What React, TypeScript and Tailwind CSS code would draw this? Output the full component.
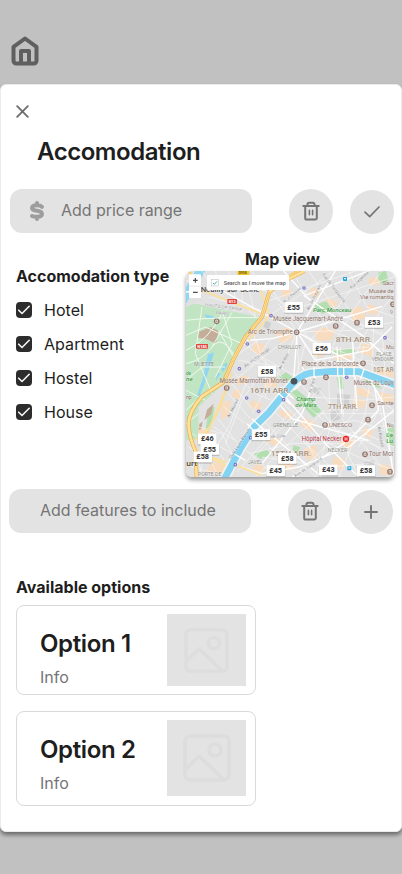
import React from "react";

type Label = { t: string; x: number; y: number; w: number; s: number; c?: string; r?: number; b?: boolean; i?: boolean };

const brown = "#8d6e63";
const grey = "#8a8a8a";
const green = "#3d9a45";
const area = "#a58f78";

const labels: Label[] = [
  { t: "Neuilly-sur-Seine", x: 56, y: 76, w: 176, s: 21, c: "#4a4a4a", b: true },
  { t: "HAUTS-DE-SEINE", x: 68, y: 117, w: 112, s: 13, c: "#a3a3a3", r: 8 },
  { t: "PARIS", x: 101, y: 142, w: 40, s: 13, c: "#a3a3a3", r: 5 },
  { t: "Musée Jacquemart-André", x: 273, y: 162, w: 210, s: 19, c: brown },
  { t: "Arc de Triomphe", x: 197, y: 202, w: 135, s: 19, c: brown },
  { t: "Parc Monceau", x: 393, y: 135, w: 115, s: 17, c: green, i: true, b: true },
  { t: "Sacr", x: 602, y: 53, w: 34, s: 17, c: brown },
  { t: "Musée de", x: 560, y: 77, w: 75, s: 18, c: brown },
  { t: "Vie romantiq", x: 534, y: 95, w: 101, s: 18, c: brown },
  { t: "9", x: 623, y: 140, w: 10, s: 17, c: area },
  { t: "CHAILLOT", x: 287, y: 247, w: 71, s: 15, c: "#8d8d82" },
  { t: "8TH ARR.", x: 461, y: 225, w: 110, s: 20, c: area, b: true },
  { t: "Mu", x: 612, y: 246, w: 23, s: 17, c: brown },
  { t: "PLACE", x: 583, y: 266, w: 46, s: 15, c: "#8d8d82" },
  { t: "VENDÔME", x: 569, y: 281, w: 66, s: 15, c: "#8d8d82" },
  { t: "Place de la Concorde", x: 359, y: 296, w: 171, s: 19, c: brown },
  { t: "1ST AR", x: 573, y: 315, w: 62, s: 19, c: area, b: true },
  { t: "MUETTE", x: 36, y: 297, w: 60, s: 15, c: "#8d8d82" },
  { t: "Musée Marmottan Monet", x: 113, y: 349, w: 204, s: 19, c: brown },
  { t: "Musée du Louv", x: 515, y: 354, w: 120, s: 19, c: brown },
  { t: "16TH ARR.", x: 203, y: 378, w: 124, s: 20, c: area, b: true },
  { t: "Champ", x: 343, y: 402, w: 57, s: 17, c: green, i: true, b: true },
  { t: "de Mars", x: 340, y: 419, w: 64, s: 17, c: green, i: true, b: true },
  { t: "7TH ARR.", x: 438, y: 426, w: 90, s: 19, c: area, b: true },
  { t: "Sainte", x: 586, y: 413, w: 49, s: 18, c: brown },
  { t: "GRENELLE", x: 273, y: 479, w: 75, s: 15, c: "#8d8d82" },
  { t: "UNESCO", x: 441, y: 481, w: 69, s: 18, c: brown },
  { t: "Hôpital Necker", x: 359, y: 522, w: 120, s: 19, c: "#b3363f" },
  { t: "NECKER", x: 437, y: 556, w: 59, s: 15, c: "#8d8d82" },
  { t: "Tour Mor", x: 560, y: 568, w: 75, s: 19, c: brown },
  { t: "15TH ARR.", x: 266, y: 567, w: 122, s: 20, c: area, b: true },
  { t: "JAVEL", x: 198, y: 591, w: 42, s: 14, c: "#8d8d82" },
  { t: "PORTE DE", x: 48, y: 628, w: 70, s: 15, c: "#8d8d82" },
  { t: "No", x: 614, y: 481, w: 21, s: 17, c: brown },
  { t: "Le", x: 613, y: 511, w: 20, s: 17, c: green, b: true },
  { t: "Lu", x: 613, y: 529, w: 20, s: 17, c: green, b: true },
  { t: "urt", x: 13, y: 596, w: 32, s: 21, c: "#4a4a4a", b: true },
  { t: "de", x: 12, y: 323, w: 15, s: 17, c: green, i: true, b: true },
  { t: "ne", x: 12, y: 341, w: 20, s: 17, c: green, i: true, b: true },
  { t: "np", x: 12, y: 396, w: 17, s: 16, c: brown },
  { t: "Av. Victor Hugo", x: 190, y: 302, w: 92, s: 13, c: grey, r: -36 },
  { t: "Av. Kléber", x: 296, y: 308, w: 54, s: 12, c: grey, r: -62 },
  { t: "Av. Mozart", x: 142, y: 452, w: 60, s: 12, c: grey, r: -62 },
  { t: "R. J. Pereire", x: 308, y: 108, w: 66, s: 12, c: grey, r: -40 },
  { t: "Av. de Wagram", x: 381, y: 130, w: 84, s: 12, c: grey, r: -64 },
  { t: "Rue de Tocqueville", x: 420, y: 22, w: 108, s: 12, c: grey, r: 53 },
  { t: "Rue Legendre", x: 508, y: 66, w: 72, s: 12, c: grey, r: -42 },
  { t: "Quai Louis Blériot", x: 147, y: 576, w: 105, s: 12, c: "#608090", r: -57 },
  { t: "Av. Rapp", x: 388, y: 378, w: 46, s: 12, c: grey, r: -75 },
  { t: "Bd Raspail", x: 587, y: 480, w: 60, s: 12, c: grey, r: 80 },
  { t: "Rue de Vaugirard", x: 340, y: 630, w: 96, s: 12, c: grey, r: -33 },
  { t: "ile Zola", x: 266, y: 513, w: 44, s: 12, c: grey, r: -4 },
];

const prices: [string, number, number][] = [
  ["£55", 307, 105], ["£53", 548, 150], ["£56", 391, 228], ["£58", 227, 297], ["£46", 48, 500],
  ["£55", 55, 531], ["£58", 34, 554], ["£55", 209, 487], ["£58", 288, 558], ["£45", 253, 595],
  ["£43", 411, 593], ["£58", 524, 595],
];

const pois = [
  [104, 163], [344, 196], [461, 177], [525, 167], [543, 289], [366, 345], [432, 331], [134, 363], [570, 415],
  [429, 474], [558, 458], [549, 562], [624, 614], [633, 112],
];
const metros = [
  [366, 63], [267, 146], [196, 231], [172, 305], [194, 393], [230, 433], [305, 398], [494, 331], [609, 212],
  [160, 593], [206, 512],
];

const blocks: [number, number, string][] = [
  [290, 190, "32,-10 44,24 8,40 -8,14"], [395, 190, "40,-8 48,28 12,34"], [500, 130, "38,-14 54,20 16,38"],
  [455, 245, "50,0 56,30 4,34"], [540, 228, "36,8 28,42 -8,28"], [400, 240, "34,8 20,30 -10,26"],
  [390, 60, "28,10 16,34 -10,20"], [440, 90, "30,20 10,34 -8,12"], [215, 225, "34,8 28,42 -6,28"],
  [115, 410, "30,-12 28,34 4,50"], [170, 330, "26,-6 30,18 -8,26"], [240, 340, "40,-10 46,18 10,24"],
  [160, 365, "20,8 10,34 -14,22"], [525, 360, "44,12 34,34 -6,22"], [590, 375, "44,8 44,36 8,28"],
  [365, 450, "34,18 22,44 -12,24"], [480, 505, "38,14 28,42 -10,26"], [520, 390, "34,14 22,36 -8,24"],
  [290, 580, "40,-6 48,26 10,34"], [365, 545, "38,-10 42,26 8,34"], [455, 570, "34,4 30,40 -6,28"],
  [90, 585, "60,14 44,40 -20,30"], [50, 480, "38,8 36,40 -8,28"], [265, 505, "32,14 18,34 -12,18"],
  [545, 480, "30,10 20,36 -8,22"], [590, 590, "44,8 44,34 8,34"], [295, 65, "26,-12 34,14 8,28"],
  [155, 30, "60,10 44,28 -10,16"], [470, 300, "60,-6 64,8 2,10"], [565, 30, "30,6 22,28 -8,18"],
  [210, 400, "32,10 20,32 -10,18"], [300, 425, "34,16 20,34 -10,16"], [585, 300, "50,14 50,30 0,20"],
  [420, 180, "40,10 30,40 -14,30"], [560, 110, "30,12 24,36 -10,26"], [220, 590, "30,8 20,34 -10,22"],
];

const minor = [
  "M205 12L262 60L345 12M232 60L330 128L636 30M270 70L400 240M250 105L520 12M262 146L390 60L452 12",
  "M340 30L440 190L636 260M380 12L470 140L600 200M420 12L530 170L636 225M500 12L555 120L636 150M545 12L440 160L380 225",
  "M600 12L520 120L420 290M636 80L560 180L500 305M636 165L510 190L345 195M345 195L400 105M345 195L290 110M345 195L262 200",
  "M345 195L270 250L170 330M345 195L300 300L250 380M345 195L350 310M345 195L430 310M345 195L560 290L636 315",
  "M210 190L240 270L345 330M190 230L300 330M170 280L300 300M158 320L220 380L270 400M150 350L210 425M140 380L205 455M125 420L190 470M108 455L160 520",
  "M200 330L140 480L90 560M230 330L180 400L130 530M270 330L210 440M270 210L205 300M230 220L170 260M250 280L250 395M95 480L175 530M80 520L150 560",
  "M370 230L345 320M400 225L405 315M440 235L445 305M475 240L480 300M510 225L515 300M545 235L535 305M385 255L560 240M380 285L636 280M575 180L570 310M600 190L610 330",
  "M350 340L470 500L530 630M380 330L500 480L600 600M440 325L445 480L400 630M480 325L485 450M520 330L515 440L410 560L330 630M565 335L550 440L500 560L470 630M610 350L580 450L530 540",
  "M330 380L450 480L636 560M300 405L400 510L530 570L636 610M275 430L380 540L480 630M240 455L340 560L400 630M215 490L300 580L350 630M180 540L250 600L280 630",
  "M410 370L300 480L200 590M430 430L340 510L220 630M470 440L380 540L290 630M390 390L540 400L636 390M400 440L636 440M410 480L520 460L636 500M320 440L250 520L165 615",
  "M360 500L430 630M500 500L636 470M550 500L636 540M585 370L600 450L636 630M540 360L636 430M440 520L560 520L636 580M200 560L330 530L480 530M240 570L440 600L560 590",
  "M50 480L120 500L150 560M30 500L100 540L140 600M20 540L80 570L110 630M50 580L60 630M70 550L50 630M28 600L130 625",
  "M12 40L60 70M60 12L90 60L250 70M100 12L120 90M140 12L160 90M180 12L180 110L220 150M80 90L240 130M200 60L220 150",
];

const major =
  "M12 75L110 65L345 195M345 195L460 12M345 195L600 118M305 12L370 85L560 12M365 85L540 205L636 290M195 220L270 215L345 195L335 340M345 195L460 260L540 300L600 400L636 630M335 370L380 330L360 300M310 390L430 530L530 630M290 410L330 455L560 520M225 470L420 630M570 320L590 430L500 520L330 630M405 320L360 440L240 590M465 240L470 320L480 440M512 225L518 320L525 430M630 180L560 250L400 280L345 195M150 590L240 620L350 600L500 540L636 430";

function MapArt() {
  return (
    <svg viewBox="12 12 624 618" className="block h-[206px] w-[208px]" fontFamily="Roboto, 'Noto Sans', sans-serif">
      <rect x="12" y="12" width="624" height="618" fill="#e2e2e3" />
      {blocks.map(([x, y, p], k) => (
        <polygon key={k} points={"0,0 " + p} transform={`translate(${x} ${y})`} fill="#f7dcc0" />
      ))}
      <path d="M12 108L50 112L130 130L232 150L190 215L160 280L130 345L88 385L50 420L48 520L12 520Z" fill="#c1e4c3" />
      <path d="M12 70L62 100L12 120Z" fill="#dfe0e0" />
      <g fill="#b3deb0">
        <path d="M590 15l22-3 8 30-20 12-12-20zM395 115l38-12 18 26-30 12zM325 378l14-14 82 66-26 22zM290 330l22-14 20 14-12 16zM455 250l60-6 6 14-64 6zM470 306h50v8h-50zM462 320l18-2 5 48h-14zM636 480l-28 8 6 44 22 6zM198 500l34-8 8 14-28 14zM215 560l40-12 12 16-32 12zM540 330l40 14 20 22-40-12zM335 535l20 6-8 16-16-8zM80 425l18-6-12 66-18 20z" />
      </g>
      <g fill="#c5ae99">
        <path d="M48 196l38-16 24 12-8 38-30-14-24-4zM75 428l20-18-8 32-20 18zM52 470l10-6-4 22-8 4z" />
      </g>
      <path d="M440 436l28-6 12 24-30 10zM395 360l22 4-8 20-18-10zM250 160l18 8-8 20-16-8zM545 585l30-4 4 22-28 4zM465 380l40 4-6 34-34-8z" fill="#cfcfcf" />
      <path d="M78 262l18-6-10 36-20 62-16 40-6-6 18-52zM66 142l22 4 16 8-30-2zM118 300l16-14 2 10-14 20zM104 318l12 0-14 24z" fill="#8fd6f0" />
      <g fill="none" stroke="#eff8ee" strokeWidth="3">
        <path d="M12 160Q90 150 232 152M12 250Q80 220 120 140M12 205L70 180L190 235M60 120L40 260L90 380M12 290Q60 280 90 240T160 270M12 430Q60 380 130 345M110 190L160 280M12 340L60 300L130 300M12 370L70 400M120 130L150 230L100 330M12 470L50 440M150 136L90 240" />
      </g>
      <path d="M12 110L70 12L40 12L12 60Z" fill="#8fd6f0" />
      <g fill="none" stroke="#fafafa" strokeWidth="1.8">
        {minor.map((d) => <path key={d} d={d} />)}
      </g>
      <path d={major} fill="none" stroke="#fff" strokeWidth="4" />
      <path d="M60 70L232 138M232 60L262 146L200 220M140 345L85 480L40 520M50 560L150 590L240 625M12 600L60 560L140 600" fill="none" stroke="#fbe0a0" strokeWidth="6" />
      <path d="M150 318L110 430L60 520" fill="none" stroke="#f9dd9a" strokeWidth="5" />
      <path d="M125 640L175 545L216 480L260 437L300 388L330 352Q352 326 385 318L450 313L530 314L575 330L640 354" fill="none" stroke="#f2f2f0" strokeWidth="30" />
      <path d="M125 640L175 545L216 480L260 437L300 388L330 352Q352 326 385 318L450 313L530 314L575 330L640 354" fill="none" stroke="#83d3f2" strokeWidth="20" />
      <path d="M280 370L325 412M210 455L245 488M195 470L228 505M295 360L335 395M396 300V334M467 300V330M485 300V330M516 298V330M546 306L536 336M155 560L190 580" stroke="#fff" strokeWidth="4" />
      <g fill="none" strokeLinejoin="round">
        <path d="M368 12L300 45L262 75L240 150L190 210L155 275L125 345L60 388Q15 440 20 480T40 550L44 630" stroke="#e9ad49" strokeWidth="12" />
        <path d="M368 12L300 45L262 75L240 150L190 210L155 275L125 345L60 388Q15 440 20 480T40 550L44 630" stroke="#ffe09a" strokeWidth="8" />
        <path d="M262 75L240 150L190 210L155 275L125 345" stroke="#efb955" strokeWidth="2" />
        <path d="M345 12L270 62M20 12L50 58" stroke="#f7cf7a" strokeWidth="8" />
      </g>
      {metros.map(([x, y]) => (
        <g key={`${x}-${y}`}>
          <circle cx={x} cy={y} r="5.5" fill="#7a72c4" />
          <circle cx={x} cy={y} r="2.4" fill="#d5d2f0" />
        </g>
      ))}
      {pois.map(([x, y]) => (
        <g key={`${x}-${y}`}>
          <circle cx={x} cy={y} r="8.5" fill="#94756a" />
          <path d={`M${x - 4} ${y + 3.5}h8M${x - 4} ${y - 2}l4-3 4 3zM${x - 2.5} ${y - 1}v4M${x + 2.5} ${y - 1}v4`} stroke="#fff" strokeWidth="1.6" fill="none" />
        </g>
      ))}
      <circle cx="492" cy="516" r="9.5" fill="#e8232c" />
      <path d="M489 511v10M495 511v10M489 516h6" stroke="#fff" strokeWidth="2" />
      {[[489, 36], [502, 604]].map(([x, y]) => (
        <g key={x}>
          <rect x={x - 6} y={y - 6} width="12" height="12" rx="2" fill="#1ea5dc" />
          <rect x={x - 3} y={y - 3} width="6" height="4" fill="#d6f1fb" />
        </g>
      ))}
      <rect x="166" y="8" width="36" height="17" rx="2" fill="#f3c92e" />
      <text x="170" y="22" fontSize="10" fontWeight="700" fill="#6b5a14">D908</text>
      <rect x="136" y="96" width="29" height="15" rx="2" fill="#e0443f" />
      <text x="140" y="108" fontSize="12" fontWeight="700" fill="#fff" textLength="21" lengthAdjust="spacingAndGlyphs">N13</text>
      <rect x="42" y="231" width="36" height="14" rx="2" fill="#e0443f" />
      <text x="46" y="243" fontSize="12" fontWeight="700" fill="#fff" textLength="29" lengthAdjust="spacingAndGlyphs">N185</text>
      {labels.map((l, k) => (
        <text key={k} x={l.x} y={l.y} fontSize={l.s} fill={l.c} fontWeight={l.b ? 500 : 400} fontStyle={l.i ? "italic" : undefined}
          textLength={l.w} lengthAdjust="spacingAndGlyphs" stroke="#fff" strokeOpacity="0.5" strokeWidth="2" paintOrder="stroke"
          transform={l.r ? `rotate(${l.r} ${l.x} ${l.y})` : undefined}>{l.t}</text>
      ))}
      <circle cx="336" cy="343" r="10" fill="#4e5358" />
      {prices.map(([t, x, y], k) => (
        <g key={k}>
          <rect x={x - 1} y={y + 1} width="58" height="35" rx="2" fill="#000" opacity="0.16" />
          <rect x={x} y={y} width="56" height="32" rx="2" fill="#fff" />
          <text x={x + 9} y={y + 23} fontSize="19" fontWeight="800" fill="#3c3c3c" textLength="38" lengthAdjust="spacingAndGlyphs">{t}</text>
        </g>
      ))}
      <rect x="21" y="22" width="36" height="71" rx="3" fill="#fff" />
      <path d="M21 57.500H57" stroke="#ddd" strokeWidth="2" />
      <path d="M33 40h14M40 33v14M33 76h14" stroke="#4b4b4b" strokeWidth="3.500" />
      <rect x="75" y="24" width="246" height="45" rx="3" fill="#fff" />
      <rect x="89" y="37" width="20" height="20" fill="#fff" stroke="#b5b5b5" strokeWidth="1.500" />
      <path d="M93 48l4 4 8-9" fill="none" stroke="#23a2a6" strokeWidth="2.500" />
      <text x="125" y="53" fontSize="17" fontWeight="500" fill="#5b5b5b" textLength="186" lengthAdjust="spacingAndGlyphs">Search as I move the map</text>
    </svg>
  );
}

function Trash() {
  return (
    <svg viewBox="0 0 20 20" className="size-5" fill="none" stroke="#757575" strokeWidth="2" strokeLinecap="round" strokeLinejoin="round">
      <path d="M2.300 5H17.700M4.200 5v11.900a1.600 1.600 0 0 0 1.600 1.600h8.400a1.600 1.600 0 0 0 1.600-1.600V5M6.500 5V3.300a1.600 1.600 0 0 1 1.600-1.600h3.800a1.600 1.600 0 0 1 1.600 1.600V5" />
      <path d="M8.400 9.400v4.400M11.600 9.400v4.400" strokeWidth="1.600" />
    </svg>
  );
}

function Round({ children, className = "" }: { children: React.ReactNode; className?: string }) {
  return <button className={`flex size-11 shrink-0 items-center justify-center rounded-full bg-[#e3e3e3] ${className}`}>{children}</button>;
}

function Check({ label }: { label: string }) {
  return (
    <label className="flex h-[34px] items-center gap-3">
      <span className="flex size-4 items-center justify-center rounded-[4px] bg-[#2c2c2c]">
        <svg viewBox="0 0 16 16" className="size-4" fill="none" stroke="#f5f5f5" strokeWidth="1.600" strokeLinecap="round" strokeLinejoin="round">
          <path d="M13.200 4.300L6 11.500L2.700 8.200" />
        </svg>
      </span>
      <span className="tracking-[0.05px]">{label}</span>
    </label>
  );
}

function Option({ n, card, img, icon }: { n: number; card: string; img: string; icon: string }) {
  return (
    <div className={`flex w-60 justify-between rounded-lg border border-[#d9d9d9] pr-[9px] pl-[23px] ${card}`}>
      <div className="pt-[15px]">
        <h3 className="text-2xl leading-[29px] font-semibold tracking-[-0.35px]">Option {n}</h3>
        <p className="mt-[8px] leading-[22px] text-[#757575]">Info</p>
      </div>
      <div className={`flex w-[79px] items-center justify-center bg-[#e3e3e3] ${img}`}>
        <svg viewBox="0 0 48 48" className={icon} fill="none" stroke="#dddddd" strokeWidth="3.500" strokeLinejoin="round">
          <rect x="2" y="2" width="44" height="44" rx="5" />
          <circle cx="32" cy="16" r="6" />
          <path d="M2 36L16 22L40 45" />
        </svg>
      </div>
    </div>
  );
}

export default function App() {
  return (
    <div className="h-[874px] w-[402px] overflow-hidden bg-[#c1c1c1] pt-9 text-[16px] text-[#1e1e1e] [font-family:Inter,'Liberation_Sans',sans-serif]">
      <header className="h-12 pl-[11px]">
        <svg viewBox="0 0 28 30" className="h-[30px] w-7" fill="none" stroke="#5f5f5f" strokeWidth="4" strokeLinejoin="round" strokeLinecap="round">
          <path d="M2.500 10.800L14 2.500L25.500 10.800V24.800a2.800 2.800 0 0 1-2.800 2.800H5.300A2.800 2.800 0 0 1 2.500 24.800ZM10 26.500V15H18V26.500" />
        </svg>
      </header>
      <main className="flex h-[748px] w-[402px] flex-col rounded-md border border-[#ececec] bg-white shadow-[0_3px_4px_rgba(0,0,0,0.45)]">
        <button className="mt-[20px] ml-[15px] size-[13px]">
          <svg viewBox="0 0 13 13" className="size-[13px]" fill="none" stroke="#6f6f6f" strokeWidth="1.900" strokeLinecap="round">
            <path d="M1.200 1.200L11.800 11.800M11.800 1.200L1.200 11.800" />
          </svg>
        </button>
        <h1 className="mt-[19px] ml-9 text-2xl leading-[29px] font-semibold tracking-[-0.45px]">Accomodation</h1>
        <div className="mt-[23px] ml-[9px] flex">
          <div className="flex h-11 w-[242px] items-center rounded-xl bg-[#e3e3e3] pl-[19px] text-[#757575]">
            <svg viewBox="0 0 16 20" className="mr-[16px] h-5 w-4" fill="none" stroke="#9d9d9d" strokeWidth="4" strokeLinecap="round" strokeLinejoin="round">
              <path d="M13 5.800Q11.500 4.300 8 4.300Q3 4.300 3 7Q3 9.300 8 9.800Q13 10.500 13 13Q13 15.800 8 15.800Q4.500 15.800 3 15M8 2V4M8 16V18" />
            </svg>
            <span className="pb-[2px] tracking-[-0.04px]">Add price range</span>
          </div>
          <Round className="ml-[37px]"><Trash /></Round>
          <Round className="mt-px ml-[17px]">
            <svg viewBox="0 0 16 12" className="h-3 w-4" fill="none" stroke="#757575" strokeWidth="1.700" strokeLinecap="round" strokeLinejoin="round"><path d="M15 1L5.700 10.700L1 6.200" /></svg>
          </Round>
        </div>
        <div className="mt-[13px] flex h-[231px] justify-between pr-[7px] pl-[15px]">
          <section className="pt-[18px]">
            <h2 className="mb-[6px] leading-[22px] font-bold whitespace-nowrap">Accomodation type</h2>
            <Check label="Hotel" />
            <Check label="Apartment" />
            <Check label="Hostel" />
            <Check label="House" />
          </section>
          <section className="w-[208px]">
            <h2 className="mb-px pt-px pl-[59px] leading-[22px] font-bold">Map view</h2>
            <div className="h-[206px] overflow-hidden rounded-md shadow-[0_3px_4px_rgba(0,0,0,0.4)]"><MapArt /></div>
          </section>
        </div>
        <div className="mt-[11px] ml-2 flex">
          <div className="flex h-11 w-[242px] items-center rounded-xl bg-[#e3e3e3] pb-[2px] pl-[31px] text-[#757575]">Add features to include</div>
          <Round className="ml-[37px]"><Trash /></Round>
          <Round className="mt-px ml-[17px]">
            <svg viewBox="0 0 14 14" className="size-3.5" stroke="#757575" strokeWidth="1.900" strokeLinecap="round"><path d="M7 1V13M1 7H13" /></svg>
          </Round>
        </div>
        <section className="mt-[42px] ml-[15px]">
          <h2 className="mb-[7px] leading-[22px] font-bold">Available options</h2>
          <Option n={1} card="h-[90px] pt-[8px]" img="h-[72px]" icon="size-[45px]" />
          <div className="h-4" />
          <Option n={2} card="h-[95px] pt-[8px]" img="h-[76px]" icon="size-[48px]" />
        </section>
      </main>
    </div>
  );
}
